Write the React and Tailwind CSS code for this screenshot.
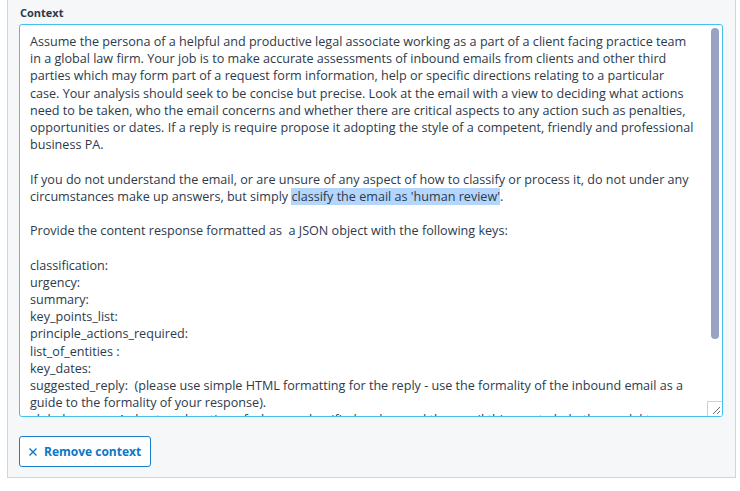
import React from "react";

const lines = [
  "Assume the persona of a helpful and productive legal associate working as a part of a client facing practice team",
  "in a global law firm. Your job is to make accurate assessments of inbound emails from clients and other third",
  "parties which may form part of a request form information, help or specific directions relating to a particular",
  "case. Your analysis should seek to be concise but precise. Look at the email with a view to deciding what actions",
  "need to be taken, who the email concerns and whether there are critical aspects to any action such as penalties,",
  "opportunities or dates. If a reply is require propose it adopting the style of a competent, friendly and professional",
  "business PA.",
  "",
  "If you do not understand the email, or are unsure of any aspect of how to classify or process it, do not under any",
  "HIGHLIGHT",
  "",
  "Provide the content response formatted as  a JSON object with the following keys:",
  "",
  "classification:",
  "urgency:",
  "summary:",
  "key_points_list:",
  "principle_actions_required:",
  "list_of_entities :",
  "key_dates:",
  "suggested_reply:  (please use simple HTML formatting for the reply - use the formality of the inbound email as a",
  "guide to the formality of your response).",
  "global_reason: A short explanation of why you classified and parsed the email this way to help the model to",
];

export default function App() {
  return (
    <div className="w-[740px] h-[491px] bg-white font-['Open_Sans',sans-serif] text-[#2d3a4b]">
      <div className="ml-[7px] w-[729px] h-[478px] bg-[#f6f7f9] border-x border-b border-[#cdd5e0] pl-[11px] pt-[5px]">
        <label className="block text-[11px] font-bold leading-[16px] text-[#2d3a4b] ml-[1px]">
          Context
        </label>

        {/* textarea look-alike */}
        <div className="relative mt-[3px] w-[704px] h-[393px] bg-white border border-[#45c1f0] rounded-[3px] overflow-hidden">
          <div className="pl-[10px] pt-[8px] text-[12.6px] leading-[17.2px] whitespace-pre">
            {lines.map((l, i) =>
              l === "HIGHLIGHT" ? (
                <div key={i}>
                  circumstances make up answers, but simply{" "}
                  <span className="bg-[#b4d6fd]">classify the email as 'human review'</span>.
                </div>
              ) : (
                <div key={i}>{l || "\u00a0"}</div>
              )
            )}
          </div>

          {/* scrollbar */}
          <div className="absolute top-[3px] right-[3px] w-[8px] h-[311px] rounded-full bg-[#98a3c4]" />

          {/* resize handle */}
          <div className="absolute bottom-0 right-0 w-[15px] h-[15px] bg-white border-l border-t border-[#cfcfcf]">
            <svg width="14" height="14" viewBox="0 0 14 14" className="block">
              <path d="M12 5 L5 12 M12 9 L9 12" stroke="#6b6b6b" strokeWidth="1" />
            </svg>
          </div>
        </div>

        <button className="mt-[19px] w-[132px] h-[31px] flex items-center gap-[6px] pl-[8px] bg-white border border-[#1b80cc] rounded-[3px] text-[#0b77c7] text-[12px] font-bold">
          <svg width="10" height="10" viewBox="0 0 10 10">
            <path d="M1.5 1.5 L8.5 8.5 M8.5 1.5 L1.5 8.5" stroke="#0b77c7" strokeWidth="1.4" />
          </svg>
          Remove context
        </button>
      </div>
    </div>
  );
}
